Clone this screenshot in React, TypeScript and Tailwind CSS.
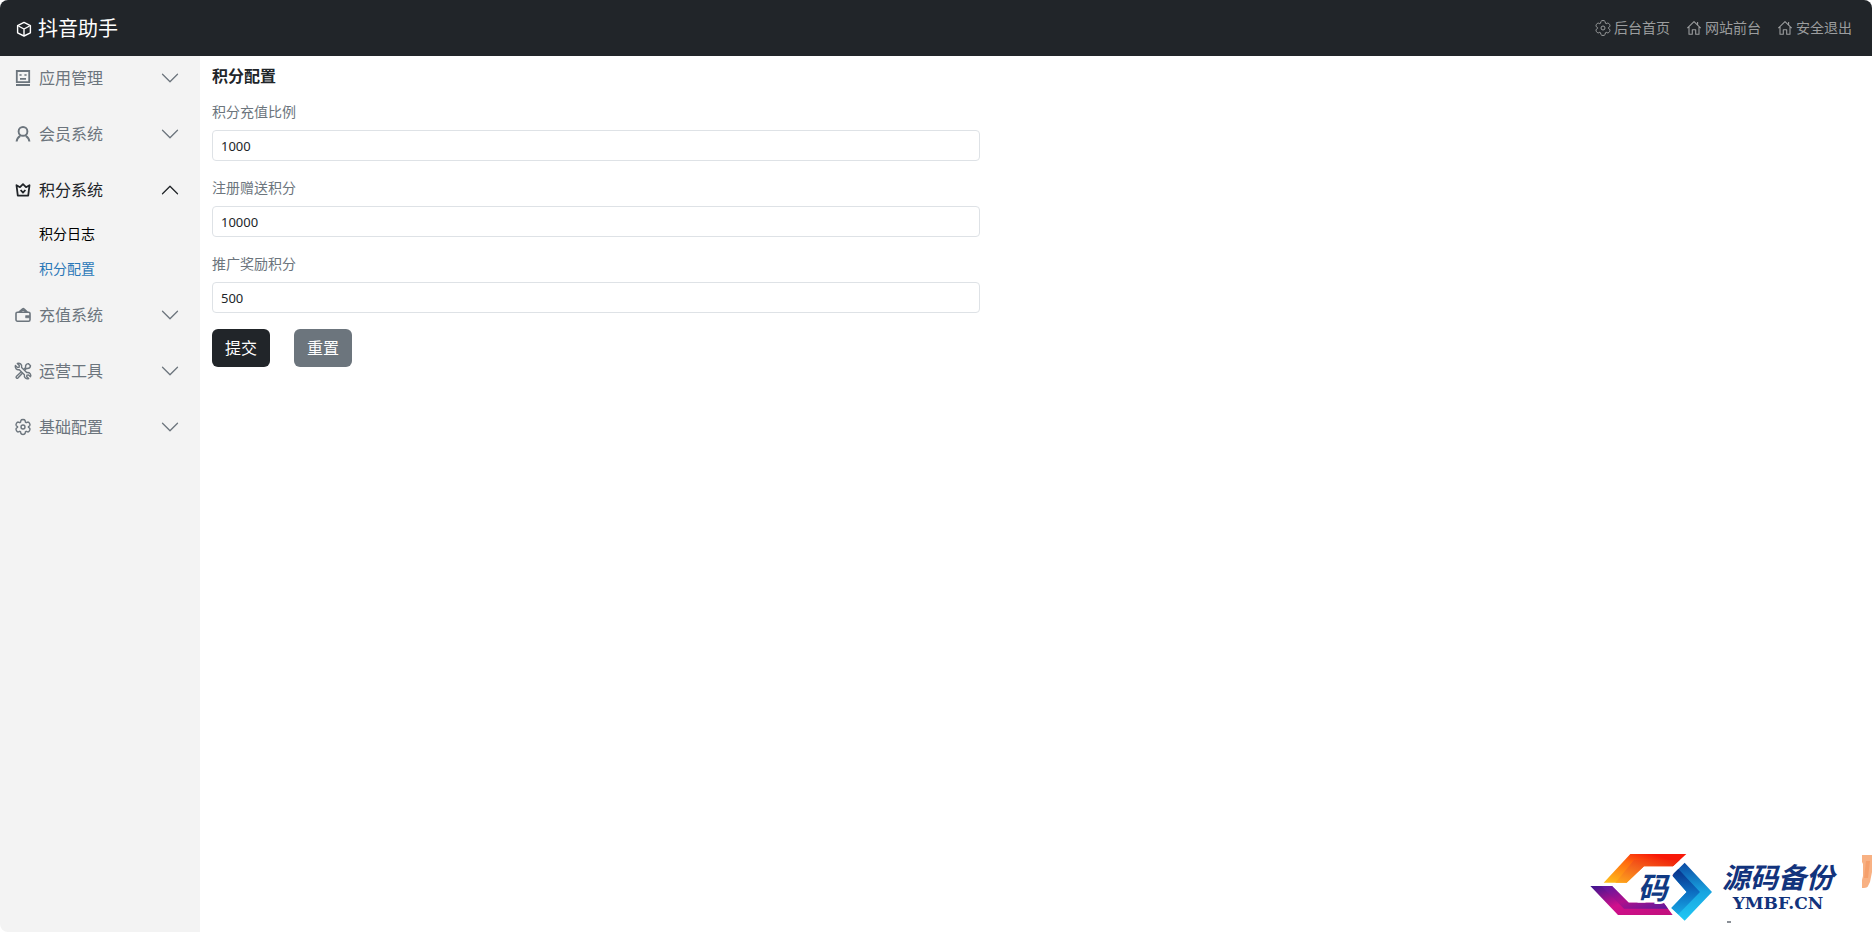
import { useState, type ReactNode } from 'react'
import { BsChevronDown } from 'react-icons/bs'
import clsx from 'clsx'

function Glyph({ children, className }: { children: ReactNode; className?: string }) {
  return (
    <svg
      viewBox="0 0 16 16"
      fill="none"
      stroke="currentColor"
      strokeWidth="1.4"
      strokeLinejoin="round"
      aria-hidden="true"
      className={clsx('size-4 shrink-0 overflow-visible', className)}
    >
      {children}
    </svg>
  )
}

const CubeIcon = () => (
  <Glyph>
    <path d="M8 1.4 14.4 4.6v7.2L8 15 1.6 11.8V4.6Z" />
    <path d="m2.4 5 5.6 3 5.6-3M8 8v6.6" />
  </Glyph>
)

const AppIcon = () => (
  <Glyph>
    <path d="M1.8 1h12.4v11.2H1.8ZM1 15h14" strokeWidth="1.8" strokeLinejoin="miter" />
    <path d="M4.4 5h2.2M9.4 5h2.2M5 8.8h6" strokeWidth="1.7" />
  </Glyph>
)

const UserIcon = () => (
  <Glyph>
    <circle cx="8" cy="5.4" r="4.4" strokeWidth="1.9" />
    <path d="M1.6 15.5c.3-2.5 1.5-4.4 3.6-5.7M14.4 15.5c-.3-2.5-1.5-4.4-3.6-5.7" strokeWidth="2" />
  </Glyph>
)

const CrownIcon = () => (
  <Glyph>
    <path d="m1.5 3.2 3.5 2L8 2.2l3 3 3.5-2-1.3 10.4H2.8Z" strokeWidth="1.8" />
    <path d="M5.6 8 8 10.6 10.4 8" strokeWidth="1.8" />
  </Glyph>
)

const WalletIcon = () => (
  <Glyph>
    <rect x="1" y="5.2" width="14" height="9" rx="1.4" strokeWidth="1.6" />
    <path d="m3.8 5 3.8-3.2c.4-.4 1-.4 1.4 0L12.4 5M5.4 4.8 8.2 3l2.6 1.8" />
    <path d="M10.6 8.6h4v2.2h-4Z" fill="currentColor" strokeWidth=".6" />
  </Glyph>
)

const ToolsIcon = () => (
  <Glyph>
    <path
      d="M.4 2.5 2.5 4.4l1.6-.2.2-1.6L2.3.5c2.3-.9 5 .7 4.3 3.9l5.1 5.1c3-.5 4.9 2 3.8 4.3l-2-1.9-1.6.3-.2 1.6 2 1.8c-2.5.9-4.9-1.1-4.3-3.8L4.3 6.7C1.7 7.3-.5 5 .4 2.5Z"
      strokeWidth="1.4"
    />
    <path
      d="m9 6.2 1.6-1.7c-.3-2 .8-3.6 2.7-3.9l2.2 2.2c-.3 1.9-1.9 2.9-3.8 2.7L9.8 7M6.3 8.7l-5 4.8c-.8.8.8 2.4 1.6 1.6l4.7-5"
      strokeWidth="1.4"
    />
  </Glyph>
)

const HomeIcon = () => (
  <Glyph>
    <path d="M1.3 8.2 8 1.6l6.7 6.6M3 7v7.3h3.3V9.8h3.4v4.5H13V7M11.6 2v2.8" strokeWidth="1.1" />
  </Glyph>
)

const GearIcon = ({ thin }: { thin?: boolean }) => (
  <Glyph>
    <path
      d="M5.9 1.5c.4-1.3 3.8-1.3 4.2 0l.3 1.7.8.5 1.5-.6c1.3-.3 3 2.6 2 3.6l-1.3 1v.6l1.3 1c1 1-.7 3.9-2 3.6l-1.5-.6-.8.5-.3 1.7c-.4 1.3-3.8 1.3-4.2 0l-.3-1.7-.8-.5-1.5.6c-1.3.3-3-2.6-2-3.6l1.3-1v-.6l-1.300-1c-1-1 .7-3.9 2-3.600l1.500.6.8-.5Z"
      strokeWidth={thin ? 1 : 1.4}
    />
    <circle cx="8" cy="8" r="2" strokeWidth={thin ? 1 : 1.4} />
  </Glyph>
)

const TOP_LINKS = [
  { label: '后台首页', icon: <GearIcon thin /> },
  { label: '网站前台', icon: <HomeIcon /> },
  { label: '安全退出', icon: <HomeIcon /> },
]

const MENU: { label: string; icon: ReactNode; children: string[] }[] = [
  { label: '应用管理', icon: <AppIcon />, children: [] },
  { label: '会员系统', icon: <UserIcon />, children: [] },
  { label: '积分系统', icon: <CrownIcon />, children: ['积分日志', '积分配置'] },
  { label: '充值系统', icon: <WalletIcon />, children: [] },
  { label: '运营工具', icon: <ToolsIcon />, children: [] },
  { label: '基础配置', icon: <GearIcon />, children: [] },
]

const FIELDS = [
  { id: 'ratio', label: '积分充值比例', value: '1000' },
  { id: 'register', label: '注册赠送积分', value: '10000' },
  { id: 'invite', label: '推广奖励积分', value: '500' },
]

function Header() {
  return (
    <header className="flex h-14 items-center justify-between bg-[#212529] pr-5 pl-4">
      <a href="#" className="flex items-center gap-[6px] pt-0.5 text-xl text-white">
        <CubeIcon />
        抖音助手
      </a>
      <nav className="flex gap-4">
        {TOP_LINKS.map((link) => (
          <a key={link.label} href="#" className="flex items-center gap-[3px] text-sm text-[#9b9d9e]">
            {link.icon}
            {link.label}
          </a>
        ))}
      </nav>
    </header>
  )
}

function Sidebar() {
  const [open, setOpen] = useState<string | null>('积分系统')

  return (
    <aside className="w-[200px] shrink-0 bg-[#f3f3f3]">
      <ul className="flex flex-col gap-3">
        {MENU.map((item) => {
          const active = item.label === open
          return (
            <li key={item.label}>
              <button
                type="button"
                aria-expanded={active}
                onClick={() => setOpen(active ? null : item.label)}
                className={clsx(
                  'flex h-11 w-full items-center gap-2 pr-5 pl-[15px]',
                  active ? 'text-[#212529]' : 'text-[#6c757d]',
                )}
              >
                {item.icon}
                {item.label}
                <BsChevronDown className={clsx('ml-auto size-5', active && 'rotate-180')} aria-hidden="true" />
              </button>
              {active && item.children.length > 0 && (
                <ul className="flex flex-col gap-[11px] pt-[10px] pl-[39px] text-sm">
                  {item.children.map((child) => (
                    <li key={child} className="h-6 leading-6">
                      <a href="#" className={child === '积分配置' ? 'text-[#2a78b8]' : 'text-black'}>
                        {child}
                      </a>
                    </li>
                  ))}
                </ul>
              )}
            </li>
          )
        })}
      </ul>
    </aside>
  )
}

function ConfigForm() {
  return (
    <form className="max-w-3xl" onSubmit={(e) => e.preventDefault()}>
      {FIELDS.map((field) => (
        <div key={field.id} className="mb-4 flex flex-col gap-2">
          <label htmlFor={field.id} className="text-sm leading-[21px] text-[#6c757d]">
            {field.label}
          </label>
          <input
            id={field.id}
            type="text"
            defaultValue={field.value}
            className="h-[31px] rounded-sm border border-[#dee2e6] bg-white px-2 text-[13px] text-[#212529]"
          />
        </div>
      ))}
      <div className="flex gap-6">
        <button type="submit" className="h-[38px] rounded-md bg-[#212529] px-[13px] text-white">
          提交
        </button>
        <button type="reset" className="h-[38px] rounded-md bg-[#6c757d] px-[13px] text-white">
          重置
        </button>
      </div>
    </form>
  )
}

function BrandMark() {
  return (
    <svg viewBox="54 60 369 210" className="h-[70px] w-[123px]" role="img" aria-label="码">
      <defs>
        <linearGradient id="warm" x1="0" y1="1" x2="1" y2="0">
          <stop offset="0" stopColor="#ffc21c" />
          <stop offset=".5" stopColor="#ff6a10" />
          <stop offset=".8" stopColor="#f81808" />
        </linearGradient>
        <linearGradient id="warmInner" x1="0" y1="1" x2="1" y2="0">
          <stop offset="0" stopColor="#ffa81c" />
          <stop offset=".5" stopColor="#f4621c" />
          <stop offset="1" stopColor="#f01c08" />
        </linearGradient>
        <linearGradient id="violet" x1="0" y1="0" x2="1" y2="1">
          <stop offset="0" stopColor="#3b1590" />
          <stop offset=".5" stopColor="#d0108c" />
          <stop offset="1" stopColor="#c0107c" />
        </linearGradient>
        <linearGradient id="violetInner" x1="0" y1="0" x2="1" y2="1">
          <stop offset="0" stopColor="#5a18a0" />
          <stop offset=".5" stopColor="#b0108c" />
          <stop offset="1" stopColor="#5a1a9c" />
        </linearGradient>
        <linearGradient id="azure" x1="0" y1="0" x2="0" y2="1">
          <stop offset="0" stopColor="#0c4aa4" />
          <stop offset=".5" stopColor="#18a4e0" />
          <stop offset="1" stopColor="#20c8f4" />
        </linearGradient>
        <linearGradient id="azureInner" x1="0" y1="0" x2="0" y2="1">
          <stop offset="0" stopColor="#083088" />
          <stop offset=".5" stopColor="#0c6cc0" />
          <stop offset="1" stopColor="#18a8e4" />
        </linearGradient>
      </defs>
      <path d="M175 66h168l-40 37h-87l-52 49H95Z" fill="url(#warm)" />
      <path d="M186 84h137l-20 19h-87l-52 49h-34Z" fill="url(#warmInner)" />
      <path d="M55 162h65l50 50h105l27 37H138Z" fill="url(#violet)" />
      <path d="M88 162h32l50 50h105l13 18H156Z" fill="url(#violetInner)" />
      <path d="m338 92 82 88-82 86-40-38 46-48-44-50Z" fill="url(#azure)" />
      <path d="m319 111 65 69-65 67-21-19 46-48-44-50Z" fill="url(#azureInner)" />
      <text
        x="242"
        y="202"
        textAnchor="middle"
        stroke="#fff"
        strokeWidth="14"
        paintOrder="stroke"
        className="fill-[#103a84] text-[90px] font-bold italic"
      >
        码
      </text>
    </svg>
  )
}

function Watermark() {
  return (
    <div className="pointer-events-none absolute right-0 bottom-[10px] flex items-center text-[#12337c]">
      <BrandMark />
      <div className="flex w-[130px] flex-col items-center">
        <span className="text-[28px] leading-8 font-bold italic">源码备份</span>
        <span className="font-['DejaVu_Serif',serif] text-[17px] leading-5 font-bold">YMBF.CN</span>
      </div>
      <svg viewBox="0 0 10 36" className="ml-[19px] h-9 w-[10px] self-start" aria-hidden="true">
        <path d="M0 3h10v27c-1 4-5 6-10 6V28l1-4V12L0 10Z" fill="#f8b183" />
        <path d="M4 9h4L6 26H2Z" fill="#f5a06c" />
        <path d="m10 20-2 10-3 6h5Z" fill="#fff" />
      </svg>
      <span className="absolute -bottom-px left-[137px] h-0.5 w-1 bg-[#8a8f96]" />
    </div>
  )
}

export default function App() {
  return (
    <div className="relative flex min-h-screen flex-col overflow-hidden rounded-lg bg-white font-['Noto_Sans','Noto_Sans_CJK_SC',sans-serif] text-base">
      <Header />
      <div className="flex flex-1">
        <Sidebar />
        <main className="flex-1 px-3 pt-2">
          <h1 className="mb-[13px] leading-6 font-bold text-[#212529]">积分配置</h1>
          <ConfigForm />
        </main>
      </div>
      <Watermark />
    </div>
  )
}
